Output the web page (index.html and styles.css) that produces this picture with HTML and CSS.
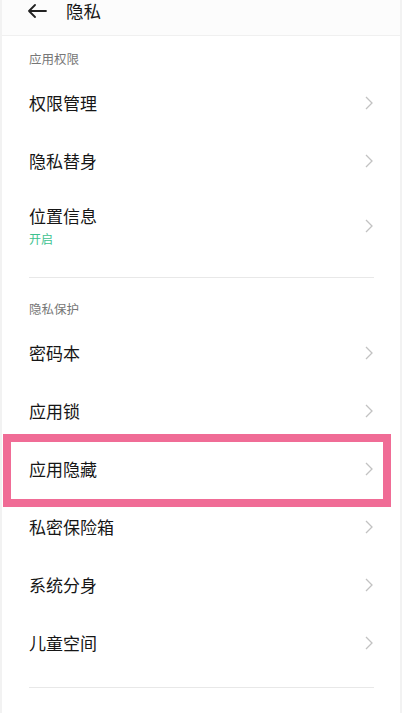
FILE: index.html
```html
<!DOCTYPE html>
<html lang="zh-CN">
<head>
    <meta charset="UTF-8">
    <meta name="viewport" content="width=device-width, initial-scale=1.0">
    <title>隐私</title>
    <link rel="stylesheet" href="styles.css">
</head>
<body>
    <div class="page">
        <div class="top-bar">
            <svg class="back-icon" width="20" height="14" viewBox="0 0 20 14">
                <path d="M19 7H2M8 1L2 7l6 6" fill="none" stroke="#222" stroke-width="1.8" stroke-linecap="round" stroke-linejoin="round"/>
            </svg>
            <h1>隐私</h1>
        </div>

        <div class="section">
            <div class="section-title">应用权限</div>
            <div class="row">
                <span class="row-title">权限管理</span>
                <svg class="chevron" viewBox="0 0 8 14"><path d="M1 1l6 6-6 6"/></svg>
            </div>
            <div class="row">
                <span class="row-title">隐私替身</span>
                <svg class="chevron" viewBox="0 0 8 14"><path d="M1 1l6 6-6 6"/></svg>
            </div>
            <div class="row tall">
                <div class="row-text">
                    <span class="row-title">位置信息</span>
                    <span class="row-sub">开启</span>
                </div>
                <svg class="chevron" viewBox="0 0 8 14"><path d="M1 1l6 6-6 6"/></svg>
            </div>
        </div>

        <div class="section">
            <div class="section-title">隐私保护</div>
            <div class="row">
                <span class="row-title">密码本</span>
                <svg class="chevron" viewBox="0 0 8 14"><path d="M1 1l6 6-6 6"/></svg>
            </div>
            <div class="row">
                <span class="row-title">应用锁</span>
                <svg class="chevron" viewBox="0 0 8 14"><path d="M1 1l6 6-6 6"/></svg>
            </div>
            <div class="row highlighted">
                <span class="row-title">应用隐藏</span>
                <svg class="chevron" viewBox="0 0 8 14"><path d="M1 1l6 6-6 6"/></svg>
            </div>
            <div class="row">
                <span class="row-title">私密保险箱</span>
                <svg class="chevron" viewBox="0 0 8 14"><path d="M1 1l6 6-6 6"/></svg>
            </div>
            <div class="row">
                <span class="row-title">系统分身</span>
                <svg class="chevron" viewBox="0 0 8 14"><path d="M1 1l6 6-6 6"/></svg>
            </div>
            <div class="row">
                <span class="row-title">儿童空间</span>
                <svg class="chevron" viewBox="0 0 8 14"><path d="M1 1l6 6-6 6"/></svg>
            </div>
        </div>

        <div class="section">
            <div class="section-title">其他设置</div>
        </div>
    </div>
</body>
</html>
```

FILE: styles.css
```css
* {
    margin: 0;
    padding: 0;
    box-sizing: border-box;
}

body {
    background-color: #fff;
    color: #161616;
    font-family: "Noto Sans CJK SC", "Noto Sans", sans-serif;
    overflow: hidden;
}

.page {
    width: 402px;
    height: 713px;
    overflow: hidden;
    border-left: 2px solid #f2f2f2;
    border-right: 2px solid #f2f2f2;
}

.top-bar {
    display: flex;
    align-items: center;
    height: 36px;
    padding: 1px 0 14px 25px;
    background-color: #fcfcfc;
    border-bottom: 1px solid #f0f0f0;
}

.back-icon {
    width: 20px;
    height: 14px;
}

.top-bar h1 {
    margin-left: 19px;
    font-size: 17.5px;
    font-weight: 400;
    line-height: 20px;
}

.section {
    margin: 0 26px 0 27px;
    padding-bottom: 15px;
    border-bottom: 1px solid #e8e8e8;
}

.section + .section {
    padding-top: 8px;
}

.section-title {
    padding-top: 15px;
    padding-bottom: 7px;
    font-size: 12.5px;
    line-height: 16px;
    color: #777;
}

.row {
    position: relative;
    display: flex;
    align-items: center;
    justify-content: space-between;
    height: 58px;
}

.row.tall {
    height: 72px;
}

.row-text {
    display: flex;
    flex-direction: column;
}

.row-title {
    font-size: 17px;
    line-height: 22px;
}

.row-sub {
    margin-top: 4px;
    font-size: 12px;
    line-height: 16px;
    color: #3ec28f;
}

.chevron {
    width: 8px;
    height: 14px;
    margin-right: 1px;
    fill: none;
    stroke: #c2c2c2;
    stroke-width: 1.3;
}

.highlighted::after {
    content: "";
    position: absolute;
    top: -6px;
    bottom: -9px;
    left: -26px;
    right: -17px;
    border: 8px solid #f06c96;
}
```
